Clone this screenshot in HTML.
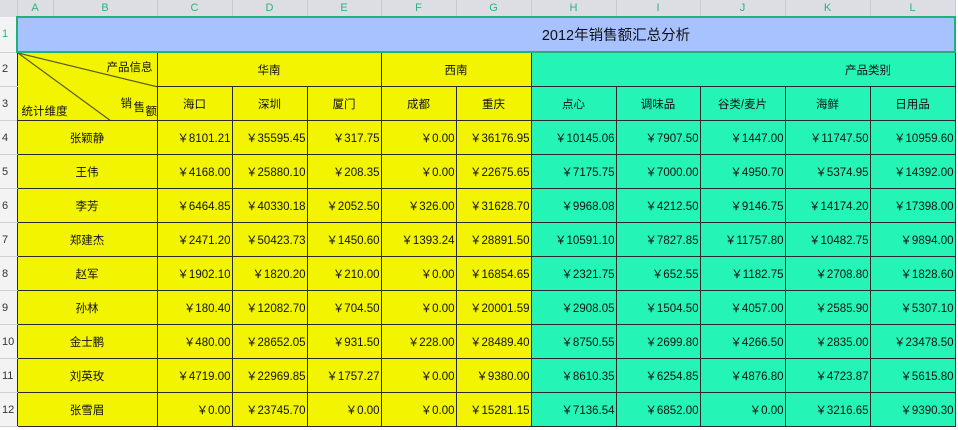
<!DOCTYPE html>
<html><head><meta charset="utf-8"><style>
body{margin:0;width:958px;height:430px;overflow:hidden;background:#fff;font-family:"Liberation Sans","Noto Sans CJK SC",sans-serif;font-size:11.5px;color:#111}
table{position:absolute;left:0;top:0;border-collapse:collapse;table-layout:fixed}
td{padding:0;height:33px;border:1px solid #2a2a2a;white-space:nowrap;overflow:hidden}
td.y{background:#f3f500;text-align:center}
td.g{background:#24f4b6}
td.n{text-align:right;padding-right:1px}
td.c{text-align:center}
tr.h td{height:16px;background:#dcdee3;border:none;border-right:1px solid #c8cacf;color:#2cb37e;text-align:center;font-size:11px}
td.r{background:#f3f3f3;border:none;border-bottom:1px solid #d0d0d0;color:#333;font-size:11px;padding-left:2px;text-align:left}
</style></head><body>
<table>
<colgroup><col style="width:17px"><col style="width:36px"><col style="width:104px"><col style="width:75px"><col style="width:75px"><col style="width:74px"><col style="width:75px"><col style="width:75px"><col style="width:85px"><col style="width:84px"><col style="width:85px"><col style="width:85px"><col style="width:85px"></colgroup>
<tr class="h"><td style="background:#dcdee3"></td><td>A</td><td>B</td><td>C</td><td>D</td><td>E</td><td>F</td><td>G</td><td>H</td><td>I</td><td>J</td><td>K</td><td>L</td></tr>
<tr><td class="r" style="color:#2cb37e;height:34px">1</td><td colspan="12" style="background:#a7c2ff;border:2px solid #1fb27a;text-align:center;font-size:14.5px;padding-left:260px">2012年销售额汇总分析</td></tr>
<tr><td class="r">2</td><td colspan="2" rowspan="2" class="y" style="position:relative;text-align:left">
<svg width="140" height="68" style="position:absolute;left:0;top:0"><line x1="0" y1="0" x2="140" y2="34" stroke="#5a5a20" stroke-width="1.2"/><line x1="0" y1="0" x2="93" y2="68" stroke="#5a5a20" stroke-width="1.2"/></svg>
<span style="position:absolute;right:4px;top:6px">产品信息</span>
<span style="position:absolute;left:4px;top:50px">统计维度</span>
<span style="position:absolute;left:103px;top:42px">销</span><span style="position:absolute;left:116px;top:46px">售</span><span style="position:absolute;left:128px;top:50px">额</span>
</td><td colspan="3" class="y">华南</td><td colspan="2" class="y">西南</td><td colspan="5" class="g" style="padding-left:250px;text-align:center">产品类别</td></tr>
<tr><td class="r">3</td><td class="y">海口</td><td class="y">深圳</td><td class="y">厦门</td><td class="y">成都</td><td class="y">重庆</td><td class="g c">点心</td><td class="g c">调味品</td><td class="g c">谷类/麦片</td><td class="g c">海鲜</td><td class="g c">日用品</td></tr>
<tr><td class="r">4</td><td colspan="2" class="y">张颖静</td><td class="y n">￥8101.21</td><td class="y n">￥35595.45</td><td class="y n">￥317.75</td><td class="y n">￥0.00</td><td class="y n">￥36176.95</td><td class="g n">￥10145.06</td><td class="g n">￥7907.50</td><td class="g n">￥1447.00</td><td class="g n">￥11747.50</td><td class="g n">￥10959.60</td></tr>
<tr><td class="r">5</td><td colspan="2" class="y">王伟</td><td class="y n">￥4168.00</td><td class="y n">￥25880.10</td><td class="y n">￥208.35</td><td class="y n">￥0.00</td><td class="y n">￥22675.65</td><td class="g n">￥7175.75</td><td class="g n">￥7000.00</td><td class="g n">￥4950.70</td><td class="g n">￥5374.95</td><td class="g n">￥14392.00</td></tr>
<tr><td class="r">6</td><td colspan="2" class="y">李芳</td><td class="y n">￥6464.85</td><td class="y n">￥40330.18</td><td class="y n">￥2052.50</td><td class="y n">￥326.00</td><td class="y n">￥31628.70</td><td class="g n">￥9968.08</td><td class="g n">￥4212.50</td><td class="g n">￥9146.75</td><td class="g n">￥14174.20</td><td class="g n">￥17398.00</td></tr>
<tr><td class="r">7</td><td colspan="2" class="y">郑建杰</td><td class="y n">￥2471.20</td><td class="y n">￥50423.73</td><td class="y n">￥1450.60</td><td class="y n">￥1393.24</td><td class="y n">￥28891.50</td><td class="g n">￥10591.10</td><td class="g n">￥7827.85</td><td class="g n">￥11757.80</td><td class="g n">￥10482.75</td><td class="g n">￥9894.00</td></tr>
<tr><td class="r">8</td><td colspan="2" class="y">赵军</td><td class="y n">￥1902.10</td><td class="y n">￥1820.20</td><td class="y n">￥210.00</td><td class="y n">￥0.00</td><td class="y n">￥16854.65</td><td class="g n">￥2321.75</td><td class="g n">￥652.55</td><td class="g n">￥1182.75</td><td class="g n">￥2708.80</td><td class="g n">￥1828.60</td></tr>
<tr><td class="r">9</td><td colspan="2" class="y">孙林</td><td class="y n">￥180.40</td><td class="y n">￥12082.70</td><td class="y n">￥704.50</td><td class="y n">￥0.00</td><td class="y n">￥20001.59</td><td class="g n">￥2908.05</td><td class="g n">￥1504.50</td><td class="g n">￥4057.00</td><td class="g n">￥2585.90</td><td class="g n">￥5307.10</td></tr>
<tr><td class="r">10</td><td colspan="2" class="y">金士鹏</td><td class="y n">￥480.00</td><td class="y n">￥28652.05</td><td class="y n">￥931.50</td><td class="y n">￥228.00</td><td class="y n">￥28489.40</td><td class="g n">￥8750.55</td><td class="g n">￥2699.80</td><td class="g n">￥4266.50</td><td class="g n">￥2835.00</td><td class="g n">￥23478.50</td></tr>
<tr><td class="r">11</td><td colspan="2" class="y">刘英玫</td><td class="y n">￥4719.00</td><td class="y n">￥22969.85</td><td class="y n">￥1757.27</td><td class="y n">￥0.00</td><td class="y n">￥9380.00</td><td class="g n">￥8610.35</td><td class="g n">￥6254.85</td><td class="g n">￥4876.80</td><td class="g n">￥4723.87</td><td class="g n">￥5615.80</td></tr>
<tr><td class="r">12</td><td colspan="2" class="y">张雪眉</td><td class="y n">￥0.00</td><td class="y n">￥23745.70</td><td class="y n">￥0.00</td><td class="y n">￥0.00</td><td class="y n">￥15281.15</td><td class="g n">￥7136.54</td><td class="g n">￥6852.00</td><td class="g n">￥0.00</td><td class="g n">￥3216.65</td><td class="g n">￥9390.30</td></tr>
</table>
</body></html>
